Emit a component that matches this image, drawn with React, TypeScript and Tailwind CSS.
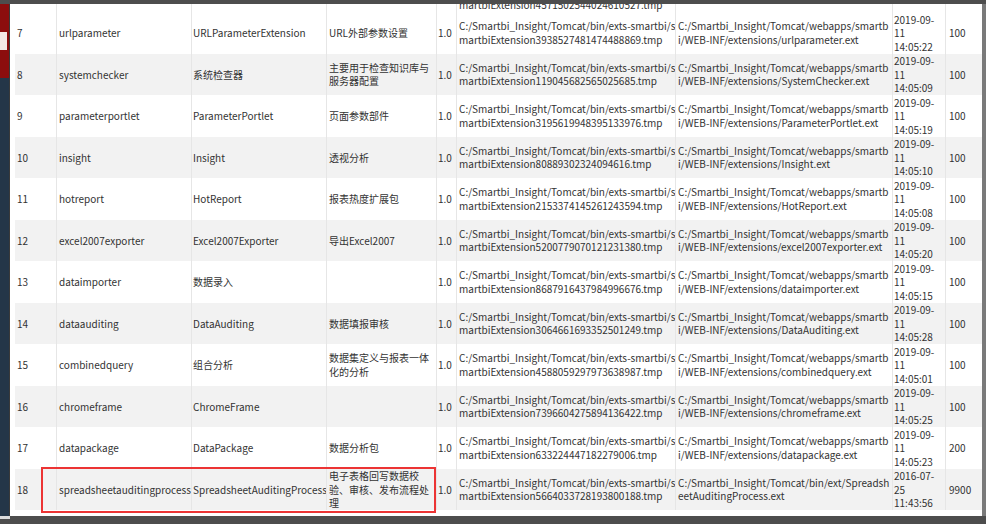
import React from "react";

type Row = {
  id: string;
  name: string;
  alias: string;
  desc: string[];
  path: string[];
  ext: string[];
  date: string[];
  priority: string;
};

const BIN = "C:/Smartbi_Insight/Tomcat/bin/exts-smartbi/s";
const WEB = "C:/Smartbi_Insight/Tomcat/webapps/smartb";

const rows: Row[] = [
  { id: "7", name: "urlparameter", alias: "URLParameterExtension", desc: ["URL外部参数设置"], path: [BIN, "martbiExtension3938527481474488869.tmp"], ext: [WEB, "i/WEB-INF/extensions/urlparameter.ext"], date: ["2019-09-", "11", "14:05:22"], priority: "100" },
  { id: "8", name: "systemchecker", alias: "系统检查器", desc: ["主要用于检查知识库与", "服务器配置"], path: [BIN, "martbiExtension119045682565025685.tmp"], ext: [WEB, "i/WEB-INF/extensions/SystemChecker.ext"], date: ["2019-09-", "11", "14:05:09"], priority: "100" },
  { id: "9", name: "parameterportlet", alias: "ParameterPortlet", desc: ["页面参数部件"], path: [BIN, "martbiExtension3195619948395133976.tmp"], ext: [WEB, "i/WEB-INF/extensions/ParameterPortlet.ext"], date: ["2019-09-", "11", "14:05:19"], priority: "100" },
  { id: "10", name: "insight", alias: "Insight", desc: ["透视分析"], path: [BIN, "martbiExtension80889302324094616.tmp"], ext: [WEB, "i/WEB-INF/extensions/Insight.ext"], date: ["2019-09-", "11", "14:05:10"], priority: "100" },
  { id: "11", name: "hotreport", alias: "HotReport", desc: ["报表热度扩展包"], path: [BIN, "martbiExtension2153374145261243594.tmp"], ext: [WEB, "i/WEB-INF/extensions/HotReport.ext"], date: ["2019-09-", "11", "14:05:08"], priority: "100" },
  { id: "12", name: "excel2007exporter", alias: "Excel2007Exporter", desc: ["导出Excel2007"], path: [BIN, "martbiExtension5200779070121231380.tmp"], ext: [WEB, "i/WEB-INF/extensions/excel2007exporter.ext"], date: ["2019-09-", "11", "14:05:20"], priority: "100" },
  { id: "13", name: "dataimporter", alias: "数据录入", desc: [], path: [BIN, "martbiExtension8687916437984996676.tmp"], ext: [WEB, "i/WEB-INF/extensions/dataimporter.ext"], date: ["2019-09-", "11", "14:05:15"], priority: "100" },
  { id: "14", name: "dataauditing", alias: "DataAuditing", desc: ["数据填报审核"], path: [BIN, "martbiExtension3064661693352501249.tmp"], ext: [WEB, "i/WEB-INF/extensions/DataAuditing.ext"], date: ["2019-09-", "11", "14:05:28"], priority: "100" },
  { id: "15", name: "combinedquery", alias: "组合分析", desc: ["数据集定义与报表一体", "化的分析"], path: [BIN, "martbiExtension4588059297973638987.tmp"], ext: [WEB, "i/WEB-INF/extensions/combinedquery.ext"], date: ["2019-09-", "11", "14:05:01"], priority: "100" },
  { id: "16", name: "chromeframe", alias: "ChromeFrame", desc: [], path: [BIN, "martbiExtension7396604275894136422.tmp"], ext: [WEB, "i/WEB-INF/extensions/chromeframe.ext"], date: ["2019-09-", "11", "14:05:25"], priority: "100" },
  { id: "17", name: "datapackage", alias: "DataPackage", desc: ["数据分析包"], path: [BIN, "martbiExtension633224447182279006.tmp"], ext: [WEB, "i/WEB-INF/extensions/datapackage.ext"], date: ["2019-09-", "11", "14:05:23"], priority: "200" },
  { id: "18", name: "spreadsheetauditingprocess", alias: "SpreadsheetAuditingProcess", desc: ["电子表格回写数据校", "验、审核、发布流程处", "理"], path: [BIN, "martbiExtension5664033728193800188.tmp"], ext: ["C:/Smartbi_Insight/Tomcat/bin/ext/Spreadsh", "eetAuditingProcess.ext"], date: ["2016-07-", "25", "11:43:56"], priority: "9900" },
];

const cols = "grid grid-cols-[42px_135px_135px_110px_20px_219px_217px_53px_29px]";

function Cell({ lines, pad = "pl-[2px]", last }: { lines: string[]; pad?: string; last?: boolean }) {
  return (
    <div className={`flex flex-col justify-center ${pad} overflow-hidden ${last ? "" : "border-r border-[#e6e6e6]"}`}>
      {lines.map((l, i) => (
        <span key={i} className="whitespace-nowrap">{l}</span>
      ))}
    </div>
  );
}

export default function App() {
  return (
    <div className="relative w-[986px] h-[524px] flex flex-col overflow-hidden bg-[#4a4a4a] text-[10px] leading-[13.5px] text-[#333] font-['Noto_Sans_CJK_SC',sans-serif]">
      <div className="h-[4px] bg-[#4d4d4d]" />
      <div className="flex flex-1 min-h-0">
        <div className="w-[10px] flex flex-col border-r border-[#3a3a3a]">
          <div className="h-[74px] bg-[#8c0d0d] pt-[28px]">
            <div className="h-[18px] w-[7px] bg-[#f3e9e6]" />
          </div>
          <div className="flex-1 bg-[#243648]" />
        </div>
        <div className="w-[972px] bg-white pl-[5px] overflow-hidden">
          {/* partially scrolled row */}
          <div className={`${cols} h-[8px] overflow-hidden`}>
            <div className="border-r border-[#e6e6e6]" />
            <div className="border-r border-[#e6e6e6]" />
            <div className="border-r border-[#e6e6e6]" />
            <div className="border-r border-[#e6e6e6]" />
            <div className="border-r border-[#e6e6e6]" />
            <div className="border-r border-[#e6e6e6] pl-[2px] whitespace-nowrap -mt-[6px]">martbiExtension4571502544024610527.tmp</div>
            <div className="border-r border-[#e6e6e6]" />
            <div className="border-r border-[#e6e6e6]" />
            <div />
          </div>
          {rows.map((r, i) => (
            <div key={r.id} className={`${cols} h-[41.5px] ${i % 2 === 1 ? "bg-[#f2f2f2]" : "bg-white"}`}>
              <Cell lines={[r.id]} />
              <Cell lines={[r.name]} />
              <Cell lines={[r.alias]} pad="pl-[1px]" />
              <Cell lines={r.desc} />
              <Cell lines={["1.0"]} pad="pl-[1px]" />
              <Cell lines={r.path} />
              <Cell lines={r.ext} />
              <Cell lines={r.date} pad="pl-[1px]" />
              <Cell lines={[r.priority]} pad="pl-[3px]" last />
            </div>
          ))}
        </div>
        <div className="flex-1 bg-[#7a7a7a]" />
      </div>
      <div className="h-[8px] bg-[#4d4d4d] flex">
        <div className="w-[10px] h-[3px] bg-[#dcdcdc]" />
      </div>
      <div className="absolute left-[41px] top-[467px] w-[395px] h-[46px] border-2 border-[#ec3434]" />
    </div>
  );
}
